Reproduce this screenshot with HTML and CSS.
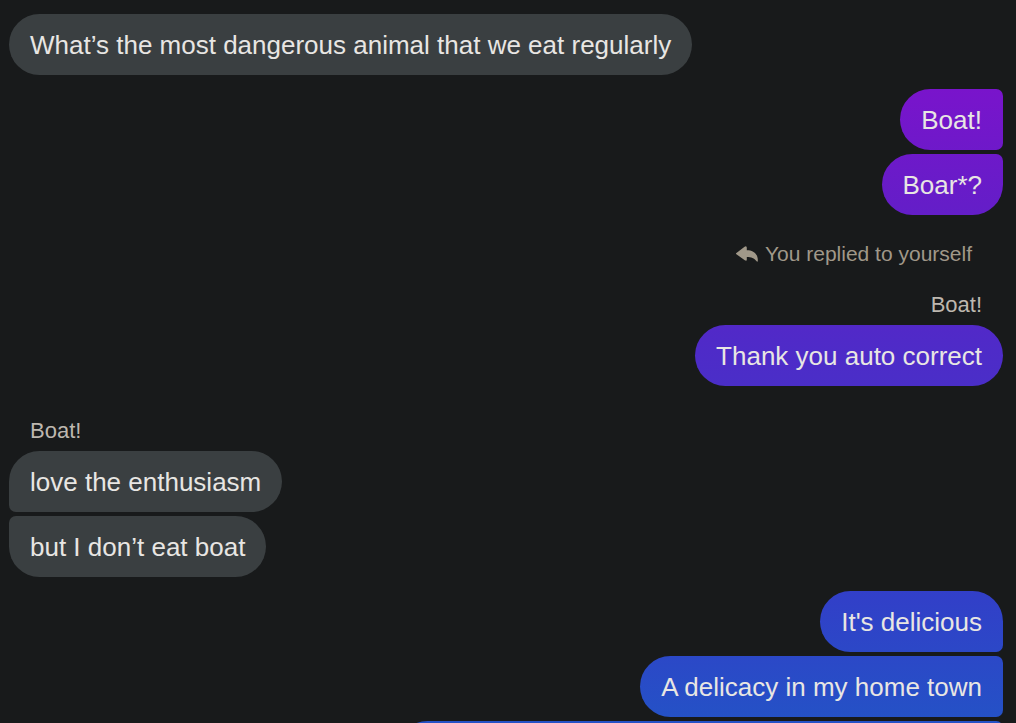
FILE: index.html
```html
<!DOCTYPE html>
<html lang="en">
<head>
<meta charset="utf-8">
<meta name="viewport" content="width=device-width, initial-scale=1">
<title>Chat</title>
<link rel="stylesheet" href="styles.css">
</head>
<body>
<main class="chat">
  <section class="group received">
    <p class="bubble">What’s the most dangerous animal that we eat regularly</p>
  </section>
  <section class="group sent">
    <p class="bubble joined-above joined-below">Boat!</p>
    <p class="bubble joined-above">Boar*?</p>
  </section>
  <section class="group sent reply">
    <p class="reply-note">
      <svg class="reply-icon" viewBox="0 0 22 16" aria-hidden="true"><path d="M0.4 6.9 8.6.7Q10.8-.6 10.8 1.8V4.2C17.4 4.2 22.3 8 21.8 15.2Q21.4 16 20.6 15.3C18.2 12 15.3 11 10.8 11V13.4Q10.8 15.6 8.8 14.3L.4 8.3Q-.5 7.6 .4 6.9Z"/></svg>
      You replied to yourself
    </p>
    <p class="quote">Boat!</p>
    <p class="bubble">Thank you auto correct</p>
  </section>
  <section class="group received quoted">
    <p class="quote">Boat!</p>
    <p class="bubble joined-below">love the enthusiasm</p>
    <p class="bubble joined-above">but I don’t eat boat</p>
  </section>
  <section class="group sent">
    <p class="bubble joined-below">It's delicious</p>
    <p class="bubble joined-above joined-below">A delicacy in my home town</p>
    <p class="bubble joined-above long"></p>
  </section>
</main>
</body>
</html>
```
FILE: styles.css
```css
* {
  box-sizing: border-box;
}

html,
body {
  height: 100%;
  overflow: hidden;
}

body {
  margin: 0;
  background: #181a1b;
  color: #e8e6e3;
  font-family: "Liberation Sans", Arial, sans-serif;
  font-size: 26px;
  line-height: 31px;
}

p {
  margin: 0;
}

.chat {
  display: flex;
  flex-direction: column;
  gap: 14px;
  height: 100%;
  overflow: hidden;
  padding: 14px 13px 0 9px;
}

.group {
  display: flex;
  flex-direction: column;
  flex-shrink: 0;
  align-items: flex-start;
  gap: 4px;
}

.sent {
  align-items: flex-end;
}

.bubble {
  min-height: 61px;
  padding: 16px 21px 14px;
  border-radius: 31px;
  background: #3a3f41;
}

.sent .bubble {
  background: linear-gradient(#8a0bcc 0, #7715cb 100px, #651dc8 205px, #4e2bc8 350px, #3140c8 600px, #2452c6 723px) fixed;
}

.received .joined-above {
  border-top-left-radius: 7px;
}

.received .joined-below {
  border-bottom-left-radius: 7px;
}

.sent .joined-above {
  border-top-right-radius: 7px;
}

.sent .joined-below {
  border-bottom-right-radius: 7px;
}

.long {
  width: 61%;
}

.quote {
  padding: 0 21px 1px;
  color: #bdb7af;
  font-size: 22px;
}

.reply {
  padding-top: 9px;
}

.quoted {
  padding-top: 15px;
}

.reply-note {
  display: flex;
  align-items: center;
  gap: 7px;
  padding: 0 31px 16px 0;
  color: #a09889;
  font-size: 21px;
}

.reply-icon {
  width: 22px;
  height: 16px;
  fill: currentColor;
}
```
